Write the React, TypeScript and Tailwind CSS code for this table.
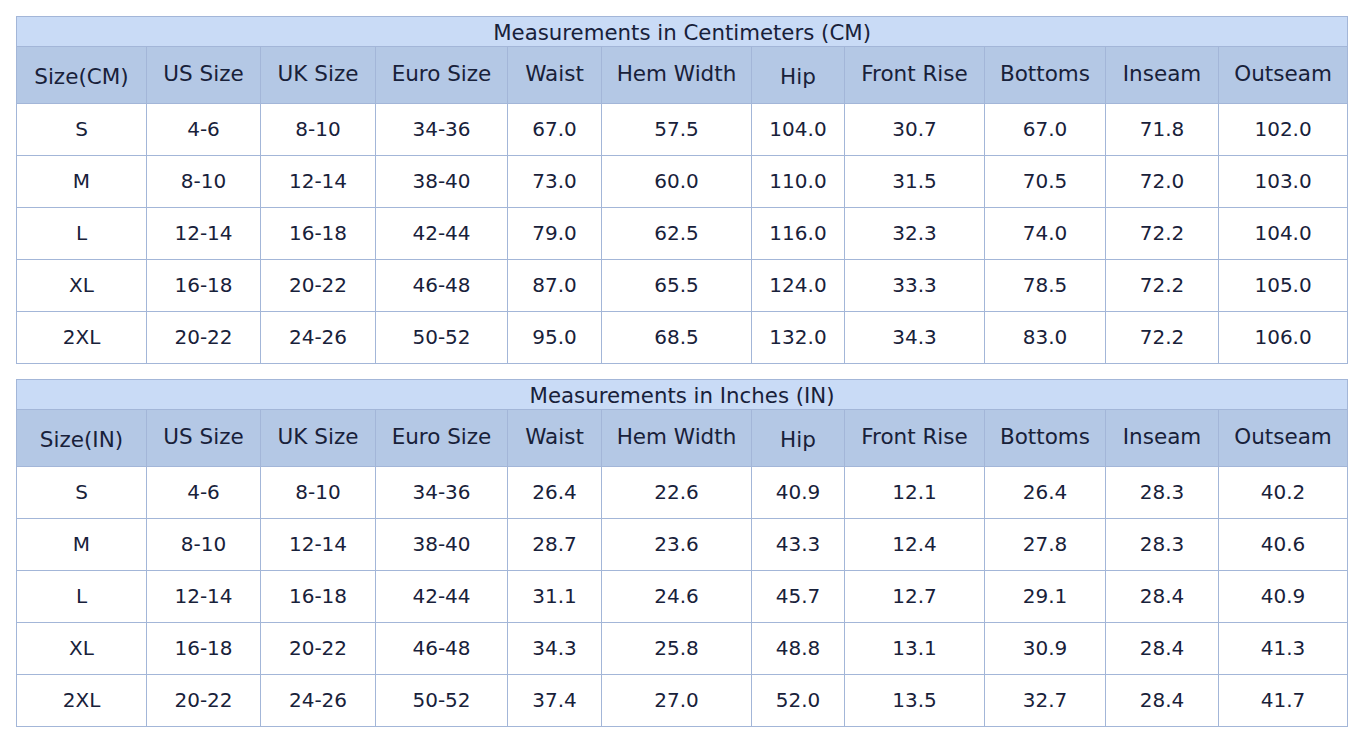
const cols = [130, 114, 115, 132, 94, 150, 93, 140, 121, 113, 129];

const headers = ['US Size', 'UK Size', 'Euro Size', 'Waist', 'Hem Width', 'Hip', 'Front Rise', 'Bottoms', 'Inseam', 'Outseam'];

const sizes = [
  ['S', '4-6', '8-10', '34-36'],
  ['M', '8-10', '12-14', '38-40'],
  ['L', '12-14', '16-18', '42-44'],
  ['XL', '16-18', '20-22', '46-48'],
  ['2XL', '20-22', '24-26', '50-52'],
];

const cm = [
  ['67.0', '57.5', '104.0', '30.7', '67.0', '71.8', '102.0'],
  ['73.0', '60.0', '110.0', '31.5', '70.5', '72.0', '103.0'],
  ['79.0', '62.5', '116.0', '32.3', '74.0', '72.2', '104.0'],
  ['87.0', '65.5', '124.0', '33.3', '78.5', '72.2', '105.0'],
  ['95.0', '68.5', '132.0', '34.3', '83.0', '72.2', '106.0'],
];

const inches = [
  ['26.4', '22.6', '40.9', '12.1', '26.4', '28.3', '40.2'],
  ['28.7', '23.6', '43.3', '12.4', '27.8', '28.3', '40.6'],
  ['31.1', '24.6', '45.7', '12.7', '29.1', '28.4', '40.9'],
  ['34.3', '25.8', '48.8', '13.1', '30.9', '28.4', '41.3'],
  ['37.4', '27.0', '52.0', '13.5', '32.7', '28.4', '41.7'],
];

function SizeTable({ title, unit, data }: { title: string; unit: string; data: string[][] }) {
  return (
    <table className="table-fixed border-collapse w-[1332px] text-[#18213a] text-[20px]">
      <colgroup>
        {cols.map((w, i) => (
          <col key={i} style={{ width: w }} />
        ))}
      </colgroup>
      <thead>
        <tr className="h-[29px] bg-[#c9dbf6]">
          <th colSpan={11} className="border border-[#a3b6d8] font-normal text-[21.3px] text-center leading-[26px] p-0 pt-[3px]">
            {title}
          </th>
        </tr>
        <tr className="h-[57px] bg-[#b4c8e5] text-[21.5px]">
          <th className="border border-[#a3b6d8] font-normal text-center p-0 pt-[4px]">Size({unit})</th>
          {headers.map((h) => (
            <th
              key={h}
              className={
                h === 'Hip'
                  ? 'border border-[#a3b6d8] font-normal text-center p-0 pt-[4px]'
                  : 'border border-[#a3b6d8] font-normal text-center p-0 pb-[2px]'
              }
            >
              {h}
            </th>
          ))}
        </tr>
      </thead>
      <tbody>
        {sizes.map((s, r) => (
          <tr key={s[0]} className="h-[52px] bg-white">
            {[...s, ...data[r]].map((v, c) => (
              <td key={c} className="border border-[#a3b6d8] text-center p-0 pb-[1px]">
                {v}
              </td>
            ))}
          </tr>
        ))}
      </tbody>
    </table>
  );
}

export default function App() {
  return (
    <div className="min-h-screen bg-white pt-4 pl-4 flex flex-col gap-[15px] font-['DejaVu_Sans',sans-serif]">
      <SizeTable title="Measurements in Centimeters (CM)" unit="CM" data={cm} />
      <SizeTable title="Measurements in Inches (IN)" unit="IN" data={inches} />
    </div>
  );
}
